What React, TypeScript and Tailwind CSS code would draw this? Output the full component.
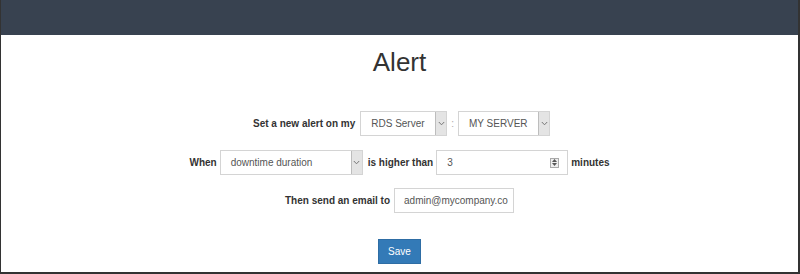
import React from "react";

function Chevron() {
  return (
    <svg width="7" height="5" viewBox="0 0 7 5" fill="none">
      <path d="M0.8 1 L3.5 3.8 L6.2 1" stroke="#777" strokeWidth="1" />
    </svg>
  );
}

function FakeSelect({ value, width }: { value: string; width: string }) {
  return (
    <div className={`flex h-[25px] ${width} border border-[#d4d4d4] bg-white`}>
      <div className="flex flex-1 items-center pl-[10px] text-[10px] text-[#555]">{value}</div>
      <div className="flex w-[11px] items-center justify-center border-l border-[#bdbdbd] bg-[#e4e4e4]">
        <Chevron />
      </div>
    </div>
  );
}

function Spinner() {
  return (
    <div className="flex h-[10px] w-[9px] flex-col items-center justify-center gap-[1px] border border-[#aaa] bg-[#eee]">
      <svg width="5" height="3" viewBox="0 0 5 3">
        <path d="M0 3 L2.5 0 L5 3 Z" fill="#555" />
      </svg>
      <svg width="5" height="3" viewBox="0 0 5 3">
        <path d="M0 0 L2.5 3 L5 0 Z" fill="#555" />
      </svg>
    </div>
  );
}

export default function App() {
  const label = "text-[10px] font-bold text-[#333] whitespace-nowrap";

  return (
    <div
      className="flex h-[274px] w-[800px] flex-col overflow-hidden border-l border-r-2 border-b-2 border-[#333] bg-white"
      style={{ fontFamily: '"Liberation Sans", Arial, sans-serif' }}
    >
      {/* Top bar */}
      <div className="h-[35px] w-full shrink-0 bg-[#384250]" />

      <div className="flex flex-col items-center">
        <h1 className="mt-[12px] h-[30px] text-[26px] leading-[30px] text-[#333]">Alert</h1>

        {/* Row 1 */}
        <div className="ml-[4px] mt-[34px] flex h-[25px] items-center">
          <span className={`${label} mr-[5px]`}>Set a new alert on my</span>
          <FakeSelect value="RDS Server" width="w-[87px]" />
          <span className="mx-[4px] text-[10px] text-[#aaa]">:</span>
          <FakeSelect value="MY SERVER" width="w-[92px]" />
        </div>

        {/* Row 2 */}
        <div className="mt-[14px] flex h-[25px] items-center">
          <span className={`${label} mr-[3px]`}>When</span>
          <FakeSelect value="downtime duration" width="w-[143px]" />
          <span className={`${label} ml-[5px] mr-[3px]`}>is higher than</span>
          <div className="flex h-[25px] w-[132px] items-center border border-[#d4d4d4] bg-white pl-[10px] pr-[8px]">
            <input
              readOnly
              value="3"
              className="min-w-0 flex-1 bg-transparent text-[10px] text-[#555] outline-none"
            />
            <Spinner />
          </div>
          <span className={`${label} ml-[3px]`}>minutes</span>
        </div>

        {/* Row 3 */}
        <div className="mt-[13px] flex h-[25px] items-center">
          <span className={`${label} mr-[4px]`}>Then send an email to</span>
          <input
            readOnly
            value="admin@mycompany.co"
            className="h-[25px] w-[120px] border border-[#d4d4d4] bg-white pl-[9px] pr-[3px] text-[10px] text-[#555] outline-none"
          />
        </div>

        <button className="mt-[26px] h-[25px] w-[43px] border border-[#2e6da4] bg-[#337ab7] text-[10px] text-white">
          Save
        </button>
      </div>
    </div>
  );
}
